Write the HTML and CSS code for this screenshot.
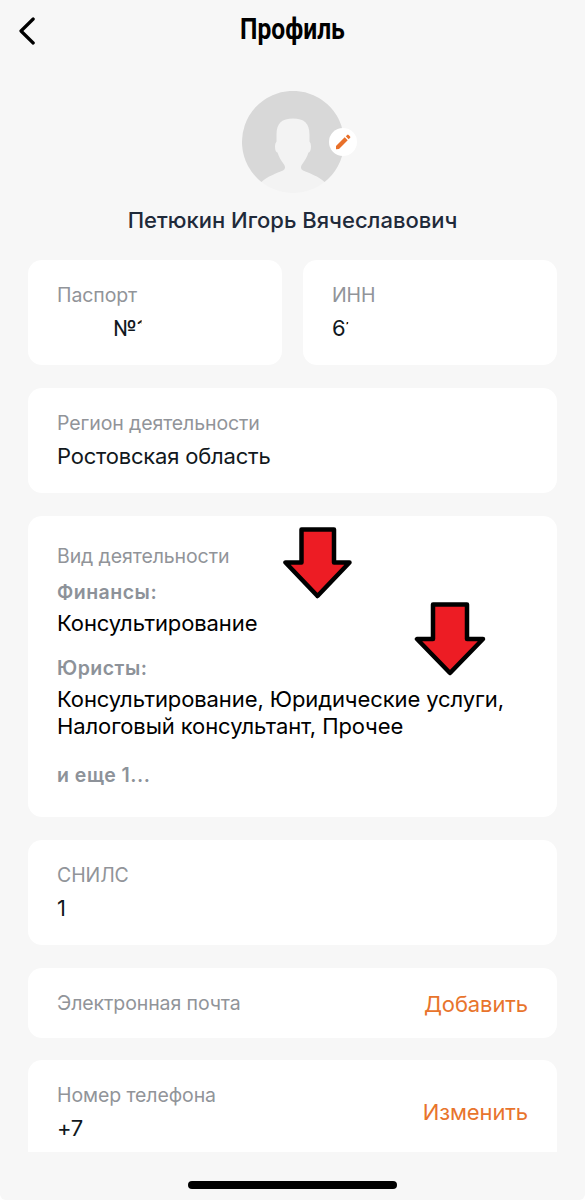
FILE: index.html
```html
<!DOCTYPE html>
<html lang="ru">
<head>
    <meta charset="UTF-8">
    <meta name="viewport" content="width=device-width, initial-scale=1.0">
    <title>Профиль</title>
    <link rel="stylesheet" href="styles.css">
</head>
<body>
    <div class="screen">
        <header class="header">
            <svg class="back" width="18" height="28" viewBox="0 0 18 28">
                <path d="M15.2 2 L3 14 L15.2 26" fill="none" stroke="#000" stroke-width="3.2" stroke-linecap="round" stroke-linejoin="round"/>
            </svg>
            <h1>Профиль</h1>
        </header>

        <div class="avatar">
            <svg width="102" height="102" viewBox="0 0 102 102">
                <circle cx="51" cy="51" r="51" fill="#f3f3f3"/>
                <path d="M19.500 91 A51 51 0 1 1 82.500 91 C77 85.500 67 82 61 79.500 Q57.500 77.500 60 73.500 C63 69.500 65 66 66.500 61.500 C68.500 61 69 58 69 55 Q69 52 67.500 50.500 V44 C67.500 32 62 27.500 51 27.500 C40 27.500 34.500 32 34.500 44 V50.500 Q33 52 33 55 C33 58 33.500 61 35.500 61.500 C37 66 39 69.500 42 73.500 Q44.500 77.500 41 79.500 C35 82 25 85.500 19.500 91 Z" fill="#d8d8d8"/>
            </svg>
            <span class="edit">
                <svg width="16" height="16" viewBox="0 0 16 16">
                    <path d="M1 12 L9.700 3.300 L12.700 6.300 L4 15 L1 15.300 Z M10.800 2.300 L12.200 0.900 Q12.900 0.300 13.600 0.900 L15.100 2.400 Q15.700 3.100 15.100 3.800 L13.700 5.200 Z" fill="#e8702a"/>
                </svg>
            </span>
        </div>
        <h2>Петюкин Игорь Вячеславович</h2>

        <main class="cards">
            <div class="row">
                <div class="card">
                    <div class="label">Паспорт</div>
                    <div class="value passport">№<span class="cut">1</span></div>
                </div>
                <div class="card">
                    <div class="label">ИНН</div>
                    <div class="value">6<span class="cut dot">1</span></div>
                </div>
            </div>

            <div class="card">
                <div class="label">Регион деятельности</div>
                <div class="value">Ростовская область</div>
            </div>

            <div class="card activity">
                <div class="label">Вид деятельности</div>
                <div class="group">Финансы:</div>
                <div class="list">Консультирование</div>
                <div class="group">Юристы:</div>
                <div class="list">Консультирование, Юридические услуги,<br>Налоговый консультант, Прочее</div>
                <div class="group more">и еще 1...</div>

                <svg class="arrow arrow-first" width="70" height="72" viewBox="0 0 70 72">
                    <path d="M18.500 2.500 H51 V35.500 H66.500 L34.500 69 L2.500 35.500 H18.500 Z"/>
                </svg>
                <svg class="arrow arrow-second" width="72" height="74" viewBox="0 0 72 74">
                    <path d="M19 2.500 H53 V37 H69 L36 71 L3 37 H19 Z"/>
                </svg>
            </div>

            <div class="card">
                <div class="label">СНИЛС</div>
                <div class="value">1</div>
            </div>

            <div class="card email">
                <div class="label">Электронная почта</div>
                <a class="action">Добавить</a>
            </div>

            <div class="card phone">
                <div>
                    <div class="label">Номер телефона</div>
                    <div class="value">+7</div>
                </div>
                <a class="action">Изменить</a>
            </div>
        </main>

        <div class="home-bar"></div>
    </div>
</body>
</html>
```
FILE: styles.css
```css
* {
    box-sizing: border-box;
}
body {
    margin: 0;
    background-color: #fff;
    font-family: Inter, "Liberation Sans", sans-serif;
}
.screen {
    height: 1200px;
    background-color: #f7f7f7;
    border-radius: 0 0 6px 6px;
    overflow: hidden;
}
.header {
    position: relative;
    height: 91px;
    padding-top: 11px;
}
.back {
    position: absolute;
    left: 18px;
    top: 17px;
}
h1 {
    margin: 0;
    font-family: Roboto, sans-serif;
    font-size: 30px;
    font-weight: 700;
    line-height: 36px;
    text-align: center;
    transform: scaleX(0.82);
}
.avatar {
    position: relative;
    width: 102px;
    height: 102px;
    margin: 0 auto;
}
.avatar svg {
    display: block;
}
.edit {
    position: absolute;
    left: 87px;
    top: 37px;
    width: 28px;
    height: 28px;
    padding: 6px;
    border-radius: 50%;
    background-color: #fff;
}
h2 {
    margin: 13px 0 0;
    font-size: 22px;
    font-weight: 450;
    line-height: 28px;
    text-align: center;
    letter-spacing: 0;
    color: #1f2a3a;
}
.cards {
    display: flex;
    flex-direction: column;
    gap: 23px;
    height: 892px;
    margin-top: 26px;
    padding: 0 28px;
    overflow: hidden;
}
.row {
    display: flex;
    gap: 21px;
}
.row .card {
    flex: 1;
}
.card {
    flex-shrink: 0;
    height: 105px;
    padding: 23px 29px 0;
    border-radius: 14px;
    background-color: #fff;
}
.label {
    font-size: 19.5px;
    line-height: 24px;
    letter-spacing: -0.1px;
    color: #919499;
}
.value {
    margin-top: 8px;
    font-size: 22px;
    line-height: 27px;
    letter-spacing: -0.2px;
    color: #111820;
}
.passport {
    padding-left: 56px;
}
.cut {
    display: inline-block;
    clip-path: inset(0 4px 18px 0);
}
.dot {
    clip-path: inset(7px 6px 17px 0);
}
.activity {
    position: relative;
    height: 301px;
    padding-top: 28px;
}
.group {
    margin-top: 12px;
    font-size: 19.5px;
    font-weight: 600;
    line-height: 24px;
    letter-spacing: 0.5px;
    color: #8d9299;
}
.list {
    margin-top: 6px;
    font-size: 22px;
    line-height: 27px;
    letter-spacing: -0.1px;
    color: #000;
}
.list + .group {
    margin-top: 19px;
}
.list + .more {
    margin-top: 23px;
}
.arrow {
    position: absolute;
    fill: #ed1c24;
    stroke: #000;
    stroke-width: 4.5;
    stroke-linejoin: round;
}
.arrow-first {
    left: 255px;
    top: 11px;
}
.arrow-second {
    left: 386px;
    top: 86px;
}
.email,
.phone {
    display: flex;
    justify-content: space-between;
}
.email {
    height: 70px;
}
.phone {
    margin-top: -1px;
}
.action {
    margin-top: -1px;
    font-size: 22px;
    line-height: 28px;
    letter-spacing: -0.1px;
    color: #e8742c;
}
.phone .action {
    margin-top: 15px;
}
.home-bar {
    width: 209px;
    height: 8px;
    margin: 29px auto 0;
    border-radius: 4px;
    background-color: #000;
}
```
